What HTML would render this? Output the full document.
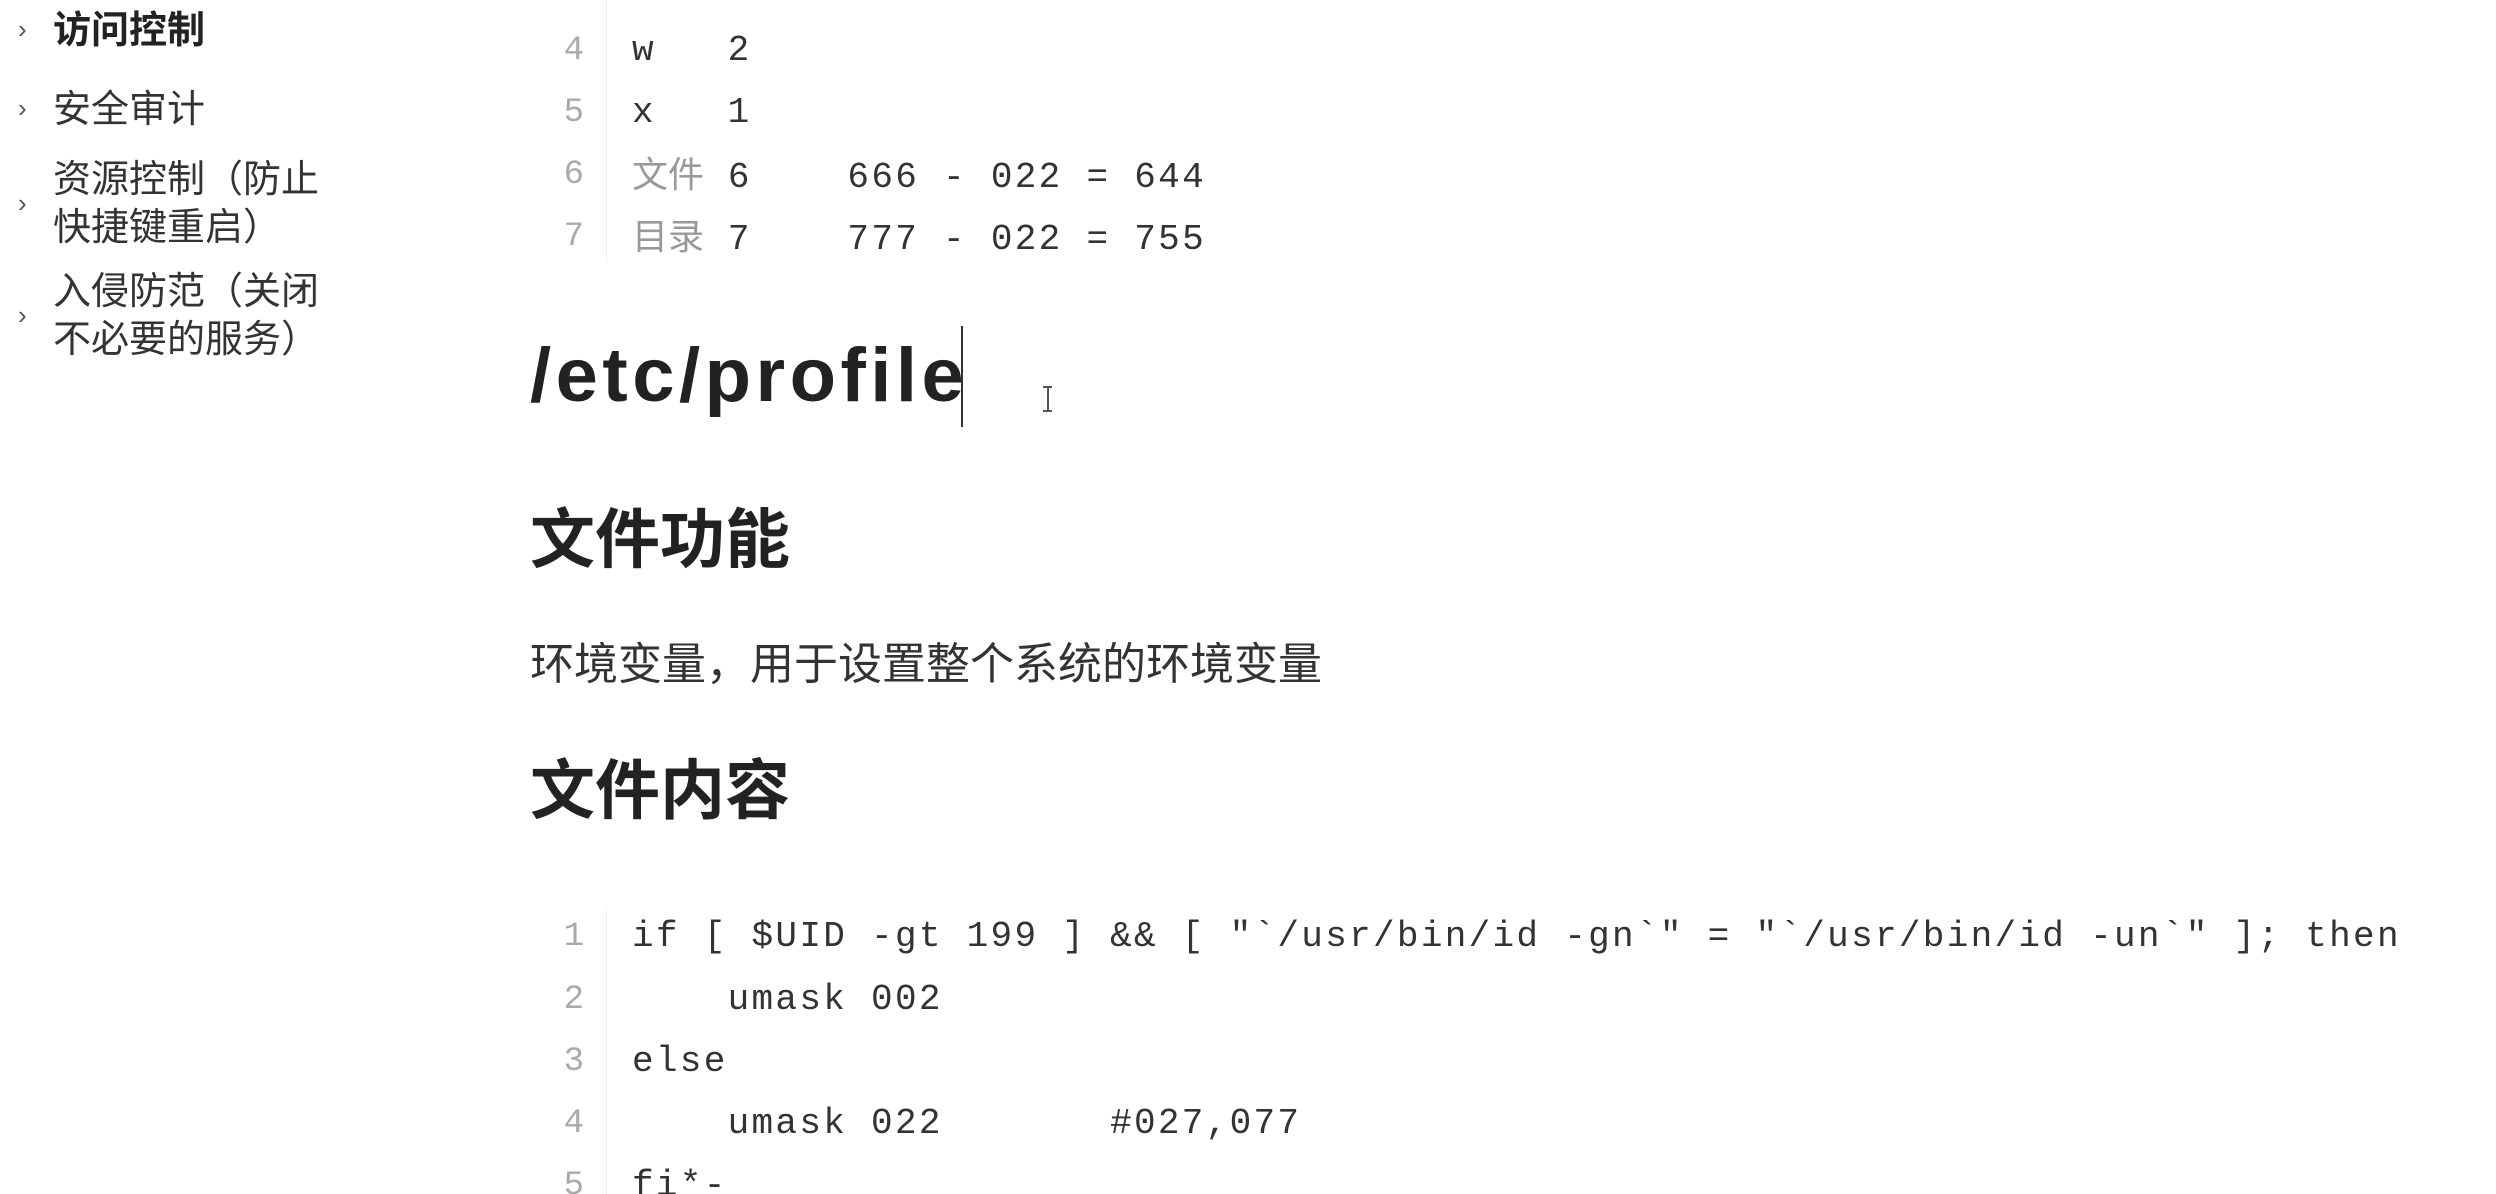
<!DOCTYPE html>
<html><head><meta charset="utf-8"><style>
html,body{margin:0;padding:0;background:#fff;width:2496px;height:1194px;overflow:hidden;position:relative}
body{font-family:"Liberation Sans","Noto Sans CJK SC",sans-serif;color:#333}
.a{position:absolute;white-space:pre;line-height:1}
.side{font-size:38px;color:#333}
.chev{font-size:26px;color:#555}
.mono{font-family:"Liberation Mono","DejaVu Sans Mono","Noto Sans CJK SC",monospace;font-size:36px;letter-spacing:2.3px;color:#333}
.ln{font-family:"Liberation Mono",monospace;font-size:34px;color:#aaa;text-align:right;width:60px;left:524px}
.g{color:#999;font-family:"Liberation Sans","Noto Sans CJK SC",sans-serif;letter-spacing:0}
</style></head><body>
<div class="a chev" style="left:18px;top:16px">›</div>
<div class="a side" style="left:53px;top:12px;font-weight:bold;color:#222">访问控制</div>
<div class="a chev" style="left:18px;top:95px">›</div>
<div class="a side" style="left:53px;top:91px">安全审计</div>
<div class="a chev" style="left:18px;top:190px">›</div>
<div class="a side" style="left:53px;top:161px">资源控制（防止</div>
<div class="a side" style="left:53px;top:209px">快捷键重启）</div>
<div class="a chev" style="left:18px;top:302px">›</div>
<div class="a side" style="left:53px;top:273px">入侵防范（关闭</div>
<div class="a side" style="left:53px;top:321px">不必要的服务）</div>

<div class="a" style="left:606px;top:0;width:1px;height:262px;background:#eee"></div>
<div class="a ln" style="top:34px">4</div><div class="a mono" style="left:632px;top:33px">w   2</div>
<div class="a ln" style="top:96px">5</div><div class="a mono" style="left:632px;top:95px">x   1</div>
<div class="a ln" style="top:158px">6</div><div class="a mono" style="left:632px;top:157px"><span class="g">文件</span> 6    666 - 022 = 644</div>
<div class="a ln" style="top:220px">7</div><div class="a mono" style="left:632px;top:219px"><span class="g">目录</span> 7    777 - 022 = 755</div>

<div class="a" style="left:530px;top:338px;font-size:76px;font-weight:bold;color:#222;letter-spacing:4.5px">/etc/profile</div>
<div class="a" style="left:961px;top:326px;width:2px;height:101px;background:#333"></div>
<div class="a" style="left:1043px;top:386px;width:9px;height:26px;border-top:2px solid #555;border-bottom:2px solid #555;box-sizing:border-box"></div>
<div class="a" style="left:1047px;top:386px;width:2px;height:26px;background:#555"></div>

<div class="a" style="left:530px;top:507px;font-size:65px;font-weight:bold;color:#222">文件功能</div>
<div class="a" style="left:530px;top:643px;font-size:44px;color:#333">环境变量，用于设置整个系统的环境变量</div>
<div class="a" style="left:530px;top:758px;font-size:65px;font-weight:bold;color:#222">文件内容</div>

<div class="a" style="left:606px;top:905px;width:1px;height:289px;background:#eee"></div>
<div class="a ln" style="top:920px">1</div><div class="a mono" style="left:632px;top:919px">if [ $UID -gt 199 ] &amp;&amp; [ "`/usr/bin/id -gn`" = "`/usr/bin/id -un`" ]; then</div>
<div class="a ln" style="top:983px">2</div><div class="a mono" style="left:632px;top:982px">    umask 002</div>
<div class="a ln" style="top:1045px">3</div><div class="a mono" style="left:632px;top:1044px">else</div>
<div class="a ln" style="top:1107px">4</div><div class="a mono" style="left:632px;top:1106px">    umask 022       #027,077</div>
<div class="a ln" style="top:1169px">5</div><div class="a mono" style="left:632px;top:1168px">fi*-</div>
</body></html>
